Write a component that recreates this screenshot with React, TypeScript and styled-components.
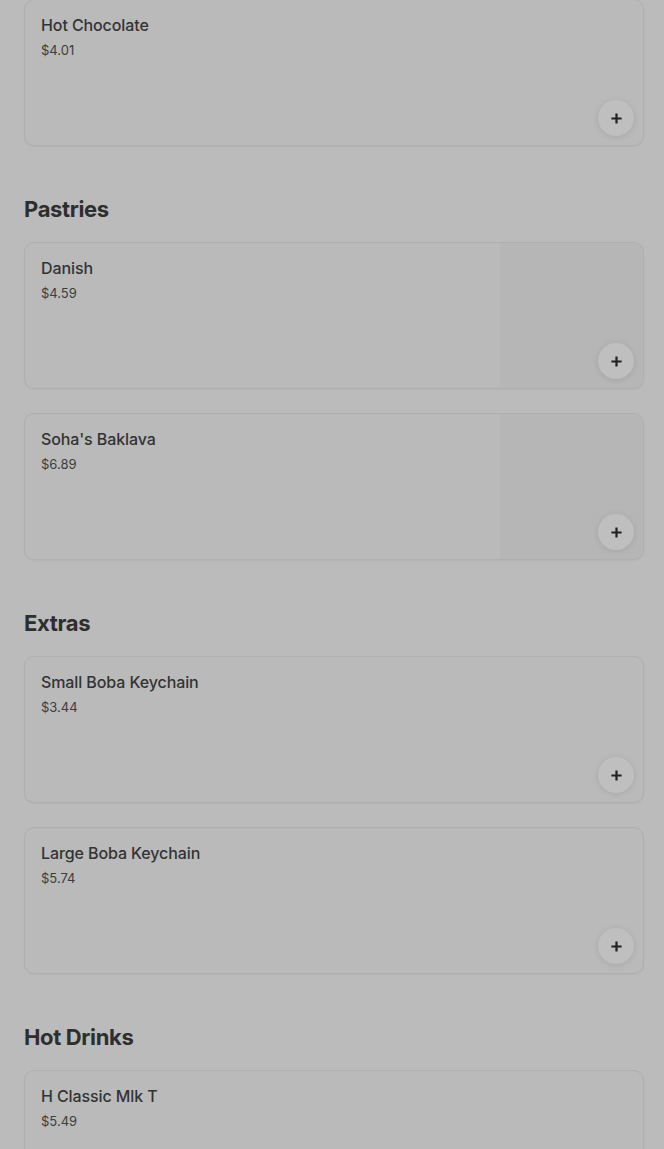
import React from "react";
import styled, { createGlobalStyle } from "styled-components";

const Global = createGlobalStyle`
  html, body { margin: 0; padding: 0; background: #bbbbbb; }
  body { font-family: Inter, "Noto Sans", sans-serif; -webkit-font-smoothing: antialiased; }
  * { box-sizing: border-box; }
`;

const Page = styled.main`
  padding: 0 20px 0 24px;
  margin-top: -1px;
  display: flex;
  flex-direction: column;
`;

const Section = styled.section<{ $first?: boolean }>`
  display: flex;
  flex-direction: column;
  gap: 24px;
  margin-top: ${(p) => (p.$first ? "0" : "49px")};
`;

const Heading = styled.h2`
  margin: 0 0 -5px;
  font-size: 22px;
  line-height: 28px;
  font-weight: 700;
  letter-spacing: -0.35px;
  color: #2e2e2e;
`;

const Card = styled.article`
  position: relative;
  height: 147px;
  border: 1px solid #afafaf;
  border-radius: 10px;
  background: #bababa;
  box-shadow: 0 1px 2px rgba(0, 0, 0, 0.04);
  display: flex;
  overflow: hidden;
`;

const Info = styled.div`
  flex: 1;
  padding: 15px 16px;
  display: flex;
  flex-direction: column;
`;

const Name = styled.div`
  font-size: 16px;
  line-height: 20px;
  font-weight: 500;
  letter-spacing: -0.1px;
  color: #333333;
  margin-bottom: 5px;
`;

const Price = styled.div`
  font-size: 13px;
  line-height: 20px;
  color: #3d3d3d;
`;

const Thumb = styled.div`
  width: 143px;
  background: #b6b6b6;
`;

const AddButton = styled.button`
  position: absolute;
  right: 9px;
  bottom: 9px;
  width: 36px;
  height: 36px;
  border-radius: 50%;
  border: none;
  padding: 0;
  background: #bfbfbf;
  box-shadow: 0 1px 6px rgba(0, 0, 0, 0.1);
  display: flex;
  align-items: center;
  justify-content: center;
  color: #222;
`;

const Plus = () => (
  <svg width="13" height="13" viewBox="0 0 14 14" fill="none">
    <path d="M7 1.5v11M1.5 7h11" stroke="currentColor" strokeWidth="2.4" />
  </svg>
);

type Item = { name: string; price: string; thumb?: boolean };
type Group = { title?: string; items: Item[] };

const groups: Group[] = [
  { items: [{ name: "Hot Chocolate", price: "$4.01" }] },
  {
    title: "Pastries",
    items: [
      { name: "Danish", price: "$4.59", thumb: true },
      { name: "Soha's Baklava", price: "$6.89", thumb: true },
    ],
  },
  {
    title: "Extras",
    items: [
      { name: "Small Boba Keychain", price: "$3.44" },
      { name: "Large Boba Keychain", price: "$5.74" },
    ],
  },
  { title: "Hot Drinks", items: [{ name: "H Classic Mlk T", price: "$5.49" }] },
];

export default function App() {
  return (
    <>
      <Global />
      <Page>
        {groups.map((g, gi) => (
          <Section key={gi} $first={gi === 0}>
            {g.title && <Heading>{g.title}</Heading>}
            {g.items.map((it) => (
              <Card key={it.name}>
                <Info>
                  <Name>{it.name}</Name>
                  <Price>{it.price}</Price>
                </Info>
                {it.thumb && <Thumb />}
                <AddButton aria-label={`Add ${it.name}`}>
                  <Plus />
                </AddButton>
              </Card>
            ))}
          </Section>
        ))}
      </Page>
    </>
  );
}
